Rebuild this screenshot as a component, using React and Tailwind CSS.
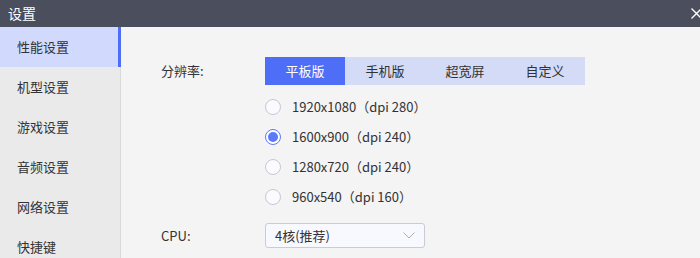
import React from "react";

const font = { fontFamily: '"Microsoft YaHei", "Noto Sans CJK SC", "Noto Sans", sans-serif' };

const menu = ["性能设置", "机型设置", "游戏设置", "音频设置", "网络设置", "快捷键"];
const tabs = ["平板版", "手机版", "超宽屏", "自定义"];
const resolutions = [
  "1920x1080（dpi 280）",
  "1600x900（dpi 240）",
  "1280x720（dpi 240）",
  "960x540（dpi 160）",
];

export default function App() {
  const [active, setActive] = React.useState(0);
  const [tab, setTab] = React.useState(0);
  const [res, setRes] = React.useState(1);

  return (
    <div className="w-[700px] h-[258px] overflow-hidden flex flex-col bg-[#f4f4f4] text-[13px] text-[#333]" style={font}>
      {/* title bar */}
      <div className="h-[27px] shrink-0 bg-[#4b4e5d] flex items-center justify-between pl-[8px] overflow-hidden">
        <span className="text-white text-[14px]">设置</span>
        <svg width="11" height="11" viewBox="0 0 11 11" className="mr-[-2px] shrink-0">
          <path d="M0.5 0.5L10.5 10.5M10.5 0.5L0.5 10.5" stroke="#fff" strokeWidth="1.3" />
        </svg>
      </div>

      <div className="flex flex-1 min-h-0">
        {/* sidebar */}
        <div className="w-[121px] shrink-0 bg-[#eaeaea] border-r border-[#d9d9d9]">
          {menu.map((m, i) => (
            <div
              key={m}
              onClick={() => setActive(i)}
              className={
                "h-10 flex items-center pl-[17px] cursor-pointer " +
                (i === active ? "bg-[#d1dafd] border-r-[3px] border-[#4f6ef7] -mr-px" : "")
              }
            >
              {m}
            </div>
          ))}
        </div>

        {/* content */}
        <div className="flex-1 pl-[40px] pt-[30px]">
          <div className="flex items-center">
            <div className="w-[104px]">分辨率:</div>
            <div className="flex h-[28px] bg-[#d3dbf7]">
              {tabs.map((t, i) => (
                <div
                  key={t}
                  onClick={() => setTab(i)}
                  className={
                    "w-20 flex items-center justify-center cursor-pointer " +
                    (i === tab ? "bg-[#4f6ef7] text-white" : "")
                  }
                >
                  {t}
                </div>
              ))}
            </div>
          </div>

          <div className="ml-[104px] mt-[7px]">
            {resolutions.map((r, i) => (
              <div key={r} className="h-[30px] flex items-center cursor-pointer" onClick={() => setRes(i)}>
                {i === res ? (
                  <span className="w-4 h-4 rounded-full border border-[#5b7af7] bg-white flex items-center justify-center">
                    <span className="w-[10px] h-[10px] rounded-full bg-[#5b7af7]" />
                  </span>
                ) : (
                  <span className="w-4 h-4 rounded-full border border-[#c5c7d6] bg-[#fbfbff]" />
                )}
                <span className="ml-[11px]">{r}</span>
              </div>
            ))}
          </div>

          <div className="flex items-center mt-[11px]">
            <div className="w-[104px]">CPU:</div>
            <div className="w-[160px] h-[25px] rounded-[3px] border border-[#c9cbd6] bg-[#f8f9ff] flex items-center justify-between pl-[9px] pr-[9px]">
              <span>4核(推荐)</span>
              <svg width="12" height="7" viewBox="0 0 12 7">
                <path d="M0.5 0.5L6 6L11.5 0.5" fill="none" stroke="#a8abb8" strokeWidth="1" />
              </svg>
            </div>
          </div>
        </div>
      </div>
    </div>
  );
}
